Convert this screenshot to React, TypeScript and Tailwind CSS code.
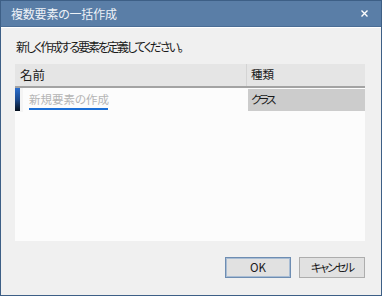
import { useState } from 'react'

const font = { fontFamily: '"Noto Sans CJK JP", "Noto Sans", sans-serif' }

export default function App() {
  const [name, setName] = useState('')

  return (
    <div
      className="w-[382px] h-[296px] flex flex-col border border-[#3d5f86] bg-[#f0f0f0] text-[12px] text-[#1a1a1a] [font-feature-settings:'palt']"
      style={font}
    >
      {/* Title bar */}
      <div className="h-[26px] flex items-center justify-between bg-[#5a7ea7] border-b border-[#4b6d95] pl-[10px] pr-[13px]">
        <span className="text-[12px] text-[#eef2f7] tracking-[-0.2px]">複数要素の一括作成</span>
        <svg width="7" height="7" viewBox="0 0 7 7" className="text-white">
          <path d="M0.5 0.5L6.5 6.5M6.5 0.5L0.5 6.5" stroke="currentColor" strokeWidth="1.4" />
        </svg>
      </div>
      <div className="h-px bg-white" />

      {/* Body */}
      <div className="flex-1 flex flex-col pl-[14px] pr-[16px] pt-[11px] pb-[17px]">
        <p className="h-[16px] leading-[16px] pl-[1px] tracking-[-2px]">新しく作成する要素を定義してください。</p>

        {/* Grid */}
        <div className="mt-[9px] h-[177px] flex flex-col bg-[#fcfcfc]">
          <div className="h-[24px] flex bg-[#e5e5e5] border-b-2 border-[#a3a3a3]">
            <div className="w-[232px] flex items-center pl-[5px] border-r border-[#d4d4d4] text-[12.5px]">名前</div>
            <div className="flex-1 flex items-center pl-[4px] text-[11.5px]">種類</div>
          </div>
          <div className="h-[24px] flex">
            <div className="w-[233px] flex">
              <div className="w-[5px] h-[23px] bg-gradient-to-b from-[#2b6fcf] via-[#1b4a8e] to-[#06101e]" />
              <div className="w-[3px] bg-[#f4f4f4]" />
              <div className="pl-[6px] pt-[1px] flex flex-col">
                <input
                  value={name}
                  onChange={(e) => setName(e.target.value)}
                  placeholder="新規要素の作成"
                  className="w-[80px] h-[19px] bg-transparent outline-none text-[11.5px] placeholder:text-[#b4b4b4]"
                  style={font}
                />
                <div className="w-[79px] h-[2px] bg-[#1c6fd6]" />
              </div>
            </div>
            <div className="flex-1 mt-px h-[22px] bg-[#cccccc] flex items-center pl-[3px] text-[11.5px] tracking-[-2.5px]">クラス</div>
          </div>
        </div>

        {/* Buttons */}
        <div className="mt-auto flex justify-end gap-[8px]">
          <button className="w-[66px] h-[21px] bg-[#e1e1e1] border border-[#6e8db2] shadow-[inset_0_0_0_1px_#a9bdd4] text-[11.5px]" style={font}>
            OK
          </button>
          <button className="w-[66px] h-[21px] bg-[#e1e1e1] border border-[#adadad] text-[11.5px] tracking-[-2px]" style={font}>
            キャンセル
          </button>
        </div>
      </div>
    </div>
  )
}
